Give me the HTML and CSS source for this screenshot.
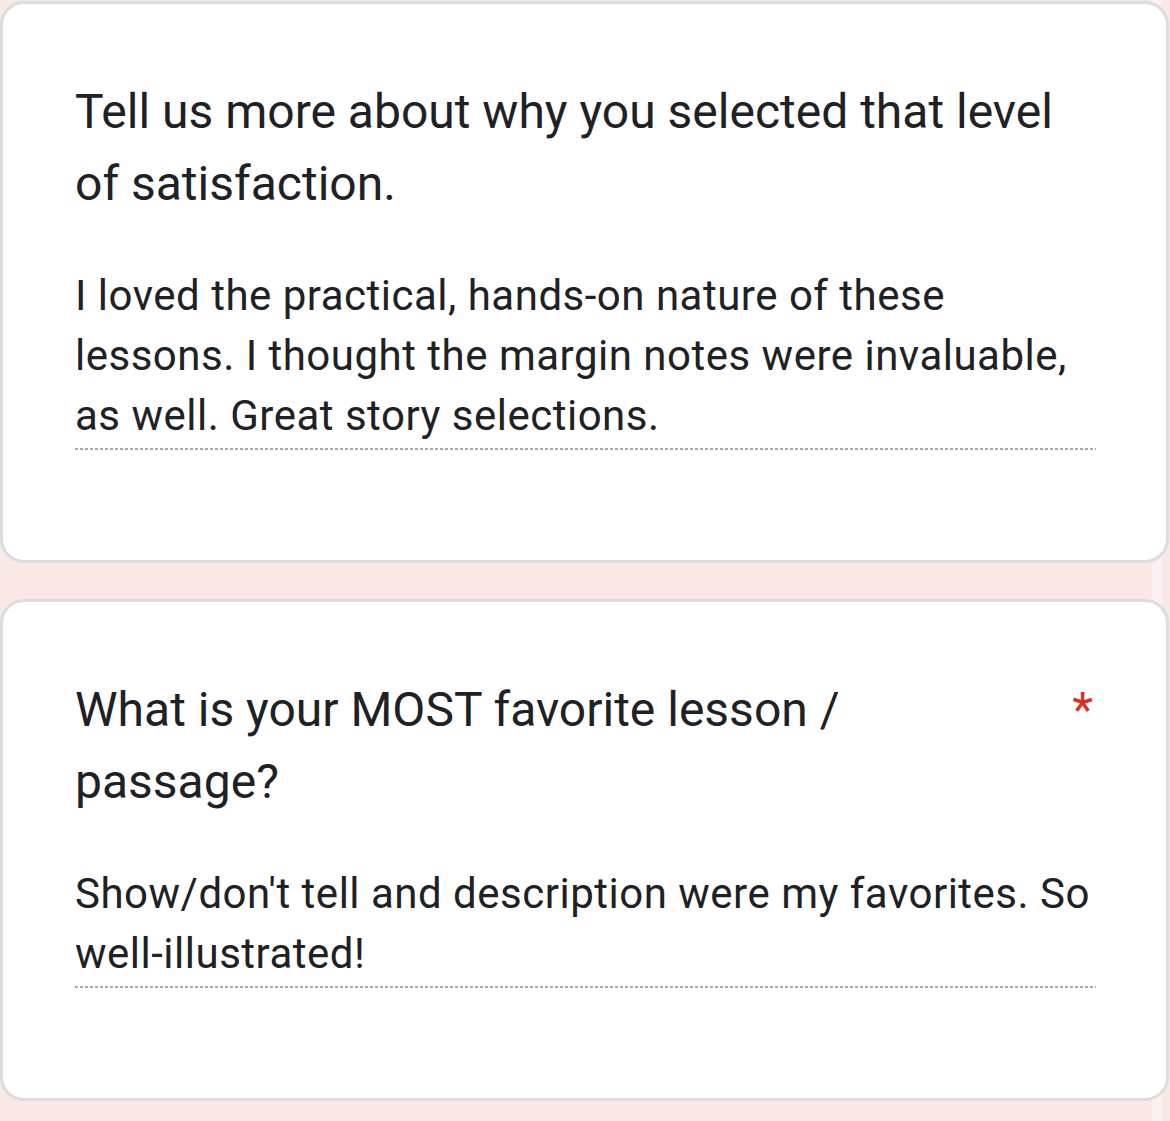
FILE: index.html
```html
<!DOCTYPE html>
<html lang="en">

<head>
    <meta charset="UTF-8">
    <meta name="viewport" content="width=device-width, initial-scale=1.0">
    <title>Form Response</title>
    <link rel="stylesheet" href="styles.css">
</head>

<body>
    <div class="scroll-track"></div>

    <div class="form">
        <div class="question">
            <div class="question-head">
                <div class="question-title">Tell us more about why you selected that level of satisfaction.</div>
            </div>
            <div class="answer">
                <div class="answer-text">I loved the practical, hands-on nature of these lessons. I thought the margin notes were invaluable, as well. Great story selections.</div>
            </div>
        </div>

        <div class="question">
            <div class="question-head">
                <div class="question-title">What is your MOST favorite lesson / passage?</div>
                <span class="required">*</span>
            </div>
            <div class="answer">
                <div class="answer-text">Show/don't tell and description were my favorites. So well-illustrated!</div>
            </div>
        </div>
    </div>
</body>

</html>
```

FILE: styles.css
```css
* {
    box-sizing: border-box;
    margin: 0;
    padding: 0;
}

body {
    font-family: Roboto, "Noto Sans", Arial, sans-serif;
    background-color: #fae8e6;
    color: #202124;
    padding-top: 1px;
    position: relative;
    min-height: 1121px;
}

/* faint scroll track on the right, only visible between cards */
.scroll-track {
    position: absolute;
    top: 0;
    right: 8px;
    width: 10px;
    height: 100%;
    background-color: #fbf1f0;
}

.form {
    display: flex;
    flex-direction: column;
    gap: 36px;
    position: relative;
    z-index: 1;
}

.question {
    background-color: #ffffff;
    border: 3px solid #dadce0;
    border-radius: 24px;
    width: 1169px;
    padding: 72px 70px 72px 72px;
}

.question-head {
    display: flex;
    align-items: flex-start;
    gap: 24px;
}

.question-title {
    flex: 1;
    font-size: 48px;
    line-height: 72px;
}

.required {
    color: #d93025;
    font-size: 48px;
    line-height: 72px;
    padding-right: 3px;
}

.answer {
    margin-top: 46px;
    margin-bottom: 36px;
}

.answer-text {
    font-size: 42px;
    line-height: 60px;
    letter-spacing: 0.5px;
    padding-bottom: 2px;
}

.answer-text::after {
    content: "";
    display: block;
    height: 2px;
    margin-top: 2px;
    background-image: repeating-linear-gradient(to right, #a8a8a8 0, #a8a8a8 3px, transparent 3px, transparent 5px);
}
```
